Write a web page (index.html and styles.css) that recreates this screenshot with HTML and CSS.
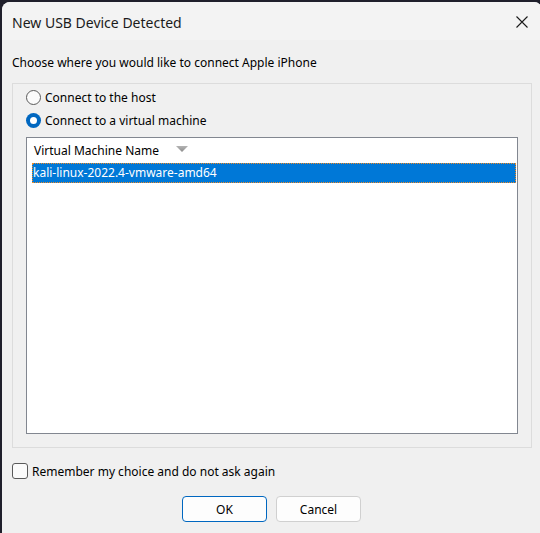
FILE: index.html
```html
<!DOCTYPE html>
<html>
<head>
<meta charset="utf-8">
<link rel="stylesheet" href="styles.css">
</head>
<body>
<div class="window">
  <div class="titlebar">
    <span class="title">New USB Device Detected</span>
    <span class="close">
      <svg width="12" height="12" viewBox="0 0 12 12"><path d="M0.5 0.5 L11.5 11.5 M11.5 0.5 L0.5 11.5" stroke="#1a1a1a" stroke-width="1.1" fill="none"/></svg>
    </span>
  </div>
  <div class="content">
    <div class="prompt">Choose where you would like to connect Apple iPhone</div>
    <div class="group">
      <div class="radio-row">
        <span class="radio"></span><span>Connect to the host</span>
      </div>
      <div class="radio-row">
        <span class="radio checked"></span><span>Connect to a virtual machine</span>
      </div>
      <div class="listbox">
        <div class="list-header">
          <span>Virtual Machine Name</span>
          <svg class="sort" width="12" height="6" viewBox="0 0 12 6"><defs><linearGradient id="g" x1="0" y1="0" x2="0" y2="1"><stop offset="0" stop-color="#b4b4b4"/><stop offset="1" stop-color="#8c8c8c"/></linearGradient></defs><path d="M0 0 H12 L6 6 Z" fill="url(#g)"/></svg>
        </div>
        <div class="list-row selected">kali-linux-2022.4-vmware-amd64</div>
      </div>
    </div>
    <div class="check-row">
      <span class="checkbox"></span><span>Remember my choice and do not ask again</span>
    </div>
    <div class="buttons">
      <button class="btn default">OK</button>
      <button class="btn">Cancel</button>
    </div>
  </div>
</div>
</body>
</html>
```
FILE: styles.css
```css
html, body {
  margin: 0;
  padding: 0;
  background: #1f1f2b;
  width: 540px;
  height: 533px;
  overflow: hidden;
}
body {
  font-family: "Noto Sans", "Open Sans", sans-serif;
  font-size: 12px;
  color: #000;
}
.window {
  margin: 2px 0 0 2px;
  width: 540px;
  height: 540px;
  border-radius: 8px;
  overflow: hidden;
  background: #f0f0f0;
  display: flex;
  flex-direction: column;
}
.titlebar {
  height: 38px;
  background: #f3f3f3;
  display: flex;
  align-items: center;
  justify-content: space-between;
  padding: 0 14px 0 10px;
  flex: none;
}
.title {
  font-size: 14px;
  color: #1b1b1b;
  margin-top: 2px;
}
.close {
  display: flex;
  margin-top: 1px;
}
.content {
  padding: 0 10px 0 10px;
  display: flex;
  flex-direction: column;
}
.prompt {
  height: 16px;
  line-height: 16px;
  margin-top: 15px;
}
.group {
  margin-top: 12px;
  width: 520px;
  height: 365px;
  border: 1px solid #dcdcdc;
  box-sizing: border-box;
  padding: 6px 13px 13px 13px;
  display: flex;
  flex-direction: column;
}
.radio-row {
  display: flex;
  align-items: center;
  height: 15px;
  gap: 4px;
  margin-bottom: 8px;
}
.radio {
  width: 15px;
  height: 15px;
  border-radius: 50%;
  border: 1px solid #5a5a5a;
  box-sizing: border-box;
  background: #fbfbfb;
  flex: none;
}
.radio.checked {
  border: none;
  background: #0067c0;
  position: relative;
}
.radio.checked::after {
  content: "";
  position: absolute;
  left: 4px;
  top: 4px;
  width: 7px;
  height: 7px;
  border-radius: 50%;
  background: #fff;
}
.listbox {
  margin-top: 1px;
  flex: 1;
  border: 1px solid #828790;
  background: #fff;
  padding: 0 1px 0 5px;
}
.list-header {
  height: 25px;
  display: flex;
  align-items: center;
  gap: 17px;
  padding-left: 2px;
}
.sort {
  margin-top: -4px;
}
.list-row {
  height: 20px;
  line-height: 19px;
  padding-left: 1px;
  box-sizing: border-box;
}
.list-row.selected {
  background: #0078d7;
  color: #fff;
  outline: 1px dotted #f08a24;
  outline-offset: -1px;
}
.check-row {
  display: flex;
  align-items: center;
  gap: 4px;
  margin-top: 15px;
  height: 16px;
}
.checkbox {
  width: 16px;
  height: 16px;
  border: 1px solid #5a5a5a;
  border-radius: 3px;
  box-sizing: border-box;
  background: #fbfbfb;
}
.buttons {
  display: flex;
  justify-content: center;
  gap: 9px;
  margin-top: 17px;
  padding-right: 1px;
}
.btn {
  width: 85px;
  height: 26px;
  font-family: inherit;
  font-size: 12px;
  background: #fdfdfd;
  border: 1px solid #d0d0d0;
  border-radius: 4px;
  color: #000;
  padding: 0;
}
.btn.default {
  border-color: #0067c0;
}
```
